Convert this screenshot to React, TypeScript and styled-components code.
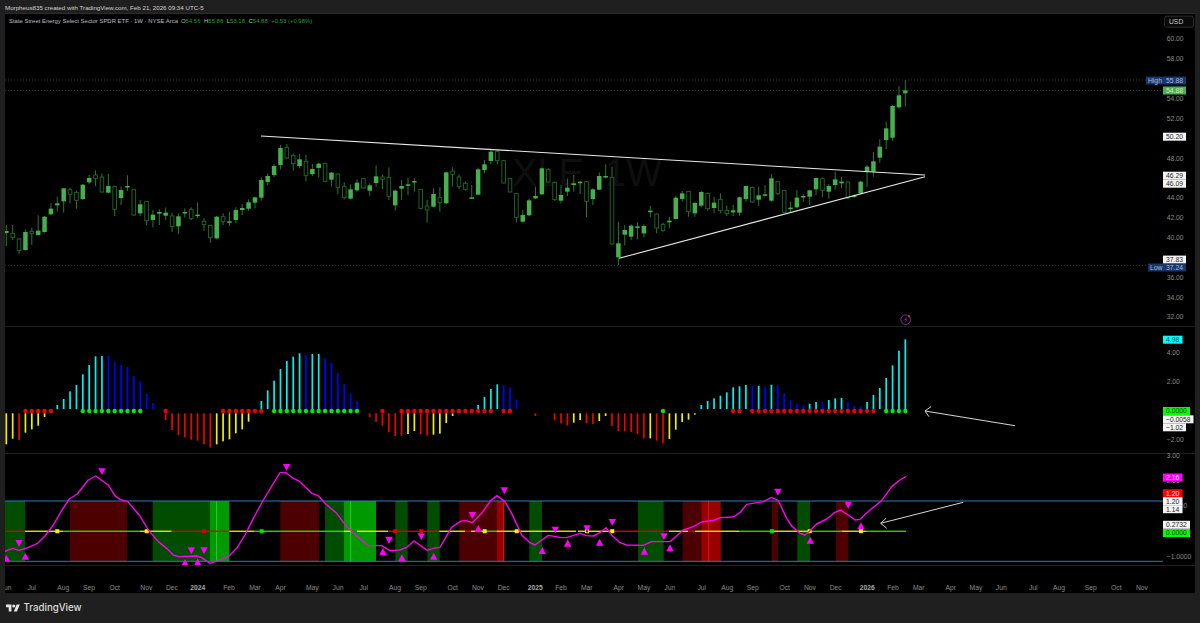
import React from "react";
import styled, { createGlobalStyle } from "styled-components";

const GlobalStyle = createGlobalStyle`
  html, body { margin: 0; padding: 0; background: #1f1f1f; }
  #root { width: 1200px; height: 623px; overflow: hidden; }
`;

const FONT = `"Liberation Sans", Arial, sans-serif`;
const AXIS_GREY = "#8c8c8c";

const Page = styled.div`
  display: flex;
  flex-direction: column;
  width: 1200px;
  height: 623px;
  background: #1f1f1f;
  font-family: ${FONT};
`;
const Header = styled.header`
  height: 13px;
  padding-left: 5px;
  font-size: 6.2px;
  line-height: 15px;
  color: #d4d4d4;
  white-space: nowrap;
`;
const Frame = styled.main`
  display: flex;
  flex-direction: column;
  width: 1190px;
  margin-left: 5px;
  background: #000;
  border-top: 1px solid #2c2c2c;
`;
const Pane = styled.section<{ $h: number }>`
  position: relative;
  display: grid;
  grid-template-columns: 1158px 32px;
  height: ${(p) => p.$h}px;
  box-sizing: border-box;
  border-bottom: 1px solid #202020;
`;
const Plot = styled.svg`
  display: block;
  width: 1158px;
  height: 100%;
  position: relative;
  z-index: 1;
`;
const AxisCanvas = styled.svg`
  display: block;
  width: 32px;
  height: 100%;
  overflow: visible;
  position: relative;
  z-index: 2;
`;
const AxisText = styled.text<{ $bold?: boolean }>`
  font-family: ${FONT};
  font-size: 6.75px;
  font-weight: ${(p) => (p.$bold ? 700 : 400)};
`;
const Legend = styled.div`
  position: absolute;
  z-index: 3;
  left: 4px;
  top: 3px;
  display: flex;
  align-items: center;
  height: 8px;
  font-size: 5.95px;
  color: #bcbfc4;
  white-space: nowrap;
`;
const LegendValues = styled.span`
  display: flex;
  gap: 3.6px;
  margin-left: 3px;
  color: #2b9a3b;
`;
const LegendLetter = styled.span`
  color: #bcbfc4;
`;
const Watermark = styled.div`
  position: absolute;
  z-index: 0;
  left: 507px;
  top: 137px;
  font-size: 38px;
  line-height: 44px;
  color: #0f0f0f;
  white-space: nowrap;
`;
const TimeCanvas = styled.svg`
  display: block;
  width: 1190px;
  height: 27px;
`;
const Footer = styled.footer`
  flex: 1;
  display: flex;
  align-items: center;
  gap: 3.5px;
  padding: 0 0 0 6px;
`;
const Brand = styled.span`
  font-family: Inter, ${FONT};
  font-size: 9.7px;
  font-weight: 500;
  color: #dcdcdc;
  line-height: 30px;
`;

/* ---------- data, in page coordinates ---------- */
const X = (i: number) => 6.3 + 6.376 * i;

type C = [number, number, number, number, 0 | 1];
const seg = (base: number, rows: C[]) =>
  rows.map(([a, b, c, d, h]) => [base + a / 3, base + b / 3, base + c / 3, base + d / 3, h] as C);

const candles: C[] = [
  ...seg(130, [
    [285,303,309,348,0],[285,310,322,330,1],[325,327,362,372,1],[298,306,360,362,0],[293,304,311,345,1],
    [256,302,315,317,0],[258,260,306,308,0],[220,236,253,255,0],[200,220,226,245,0],[175,175,214,248,0],
    [173,179,193,220,1],[182,187,211,236,1],[162,164,207,210,0],[135,144,157,163,0],[121,135,146,168,1],
    [130,141,186,188,1],[132,168,188,190,0],[167,170,238,258,1],[170,180,204,225,0],[136,168,171,183,0],
    [178,178,255,257,1],[210,223,250,258,0],[213,214,272,285,1],[240,254,270,292,0],[238,246,251,285,0],
    [233,248,257,270,0],[248,258,290,306,1],[250,259,289,312,0],[235,246,250,263,0],[232,238,266,270,1],
    [217,254,258,264,0],[264,274,284,302,1],[285,286,323,338,1],[258,260,325,328,0],[250,260,274,285,1],
    [245,274,278,288,0],[232,240,270,280,0],[222,234,240,255,0],[208,217,236,242,0],[200,202,218,235,0],
    [142,150,203,212,0],[130,138,156,165,0],[103,108,135,142,0],[45,54,105,118,0],[42,53,84,87,1],
    [70,77,101,122,1],
  ]),
  ...seg(150, [
    [12,28,48,55,0],[15,34,77,95,1],[42,57,72,78,0],[38,41,54,82,0],[38,40,94,97,1],
    [66,68,89,110,0],[70,72,113,133,1],[97,110,143,148,1],[103,118,146,148,0],[88,98,121,125,0],
    [84,86,114,116,1],[100,106,122,137,0],[46,79,99,110,0],[74,81,88,117,1],[52,82,139,150,1],
    [118,122,166,182,0],
  ]),
  ...seg(130, [
    [150,168,176,210,0],[143,163,167,195,0],[145,153,156,185,0],[177,178,235,238,1],[210,228,240,278,1],
    [175,192,230,232,0],[172,202,218,245,1],[125,127,220,222,0],[112,123,133,170,1],[133,141,170,178,1],
    [155,160,178,182,1],[165,202,205,207,0],[113,118,194,195,0],[90,103,120,130,0],[58,65,93,102,0],
    [60,65,92,103,1],[90,92,159,160,1],[143,146,186,187,1],[190,191,262,277,1],[240,255,275,278,0],
    [205,211,256,258,0],[170,198,205,207,0],[113,115,193,195,0],[115,118,156,158,1],[155,157,209,212,1],
    [165,195,212,220,0],[145,173,185,198,0],[135,160,165,185,0],[153,155,157,192,0],[153,155,214,262,1],
    [175,178,207,225,0],[127,138,179,180,0],[103,138,142,145,0],[110,142,342,345,1],[275,340,382,405,0],
    [285,300,314,346,0],[283,287,320,330,0],[277,289,292,328,0],[283,288,310,322,0],[228,242,245,262,0],
    [250,252,294,310,1],[278,283,302,305,1],[260,272,277,295,0],[197,203,267,268,0],[183,190,207,215,0],
    [183,184,245,260,1],[215,219,250,260,0],[183,186,227,232,0],[188,190,236,242,1],[200,218,234,250,0],
    [190,208,242,250,1],[227,241,251,258,1],[225,241,247,258,0],[200,202,248,258,0],[166,168,207,215,0],
    [170,172,216,218,1],[170,196,209,228,0],[165,193,197,200,0],[132,145,212,215,0],[153,155,191,195,1],
    [180,182,247,248,1],[215,233,237,248,0],[180,203,232,235,0],
  ]),
  ...seg(0, [
    [582,588,592,605,0],[571,571,590,615,0],[533,534,568,585,0],[533,536,571,592,1],[552,558,575,596,0],
    [515,538,555,568,0],[530,545,550,565,0],[545,546,594,598,1],[583,587,590,592,0],[543,545,580,583,0],
    [495,500,515,562,0],[456,484,515,530,0],[418,440,473,488,0],[365,385,420,447,0],[315,318,413,422,0],
    [258,286,322,325,0],[240,271,280,320,0],
  ]),
];

const histogram = `y313 y296 r300 y278r y268r y257r y231r n0r c195 c177 c154 c135 c103g c75g c49g c48g b48g b67g b75g b81g b107g b124g b162 b189 n0 r240r r270 r285 r292 r299 r302 r313 r323 y313 y304r y298r y280r y268r y245r n0r c183r c151 c122g c87g c63g c50g c40g b44g c42g c42g b55g b69g b99g b132g b160g b183g n0 r231 r245 r257r r277 r288 r287r y282r y273r r282r r287r y284r y281r y249r y228r n0r n0r n0r c195r c171r c147r c133 b135r b143r b179 n0 n0 r228 n0 n0 r240 r250 r257 y248 y240 r249 r252 y243 y228 r258 r273 r274 r276 r282 r295 y295 r302 r309g y297 y269 y246 y239 y224 c195 c183 c175 c167 c157 c142r c139r c135 b138r c138r b140r c134r b136r b160r b181r b193r b196r c191r c186r b187r c180r c175r c174r b186r b198r b199r c186r c165r c144 c114g c76g c32g c-2g`.split(" ");
const HIST_COLOR: Record<string, string> = { c: "#00f0f0", b: "#0000ff", r: "#f00000", y: "#f0f000", g: "#00ee00" };

const mark = (xBase: number, pts: number[][]) => pts.map(([x, y]) => [xBase + x / 3, 450 + y / 3]);
const oscLine = [
  ...mark(0, [[15,304],[38,295],[57,301],[85,292],[113,280],[135,258],[160,225],[185,182],[208,147],[232,132],[265,90],[287,78],[325,105],[345,137],[360,148],[383,155],[420,198],[445,240],[475,275],[500,295],[520,315],[535,320],[590,318],[605,323],[630,340],[655,332],[688,317],[710,295],[735,255],[760,205],[790,150],[840,68],[858,68],[875,82],[900,95],[935,130],[955,137],[975,160],[1010,190],[1040,230],[1075,262],[1105,287],[1145,287],[1170,302]]),
  ...mark(400, [[0,300],[20,292],[42,273],[82,301],[100,295],[120,292],[155,232],[180,215],[195,211],[217,218],[245,190],[272,152],[291,137],[315,155],[335,190],[365,255],[390,278],[405,285],[445,256],[480,262],[500,263],[540,250],[560,257],[580,258],[600,248],[618,233],[635,255],[660,278],[680,285],[730,286],[755,275],[810,275],[850,240],[880,230],[905,216],[945,210],[960,203],[1000,201],[1020,188],[1040,163],[1090,155],[1115,142],[1135,152],[1160,205],[1175,228]]),
  ...mark(800, [[0,250],[15,255],[30,242],[50,222],[80,207],[105,187],[122,180],[145,195],[165,210],[180,208],[210,180],[245,152],[275,110],[300,90],[317,80]]),
].map((p) => p.join(",")).join(" ");

const DARK_G = "#004d00", MID_G = "#009900", DARK_R = "#4d0000", MID_R = "#990000";
const bands: [number, number, string][] = [
  [5,25,DARK_G],[70,127,DARK_R],[152.7,210,DARK_G],[210,229.3,MID_G],[280.3,319,DARK_R],[325,344,DARK_G],[344,376,MID_G],
  [395.3,407.7,DARK_G],[427.3,439.7,DARK_G],[459.3,497,DARK_R],[497,504.3,MID_R],[529.3,542,DARK_G],[638,663.7,DARK_G],
  [682.7,701.3,DARK_R],[701.3,720.7,MID_R],[772,778,DARK_R],[797.3,810,DARK_G],[836,848.3,DARK_R],
];
const bandLines: [number, string][] = [[216.7,"#33dd33"],[350.7,"#33dd33"],[503.7,"#dd2222"],[708.7,"#dd2222"]];

const R = "#e00000", Y = "#f0f000", G = "#2ee000";
const midline: [number, number, string][] = [
  [5,25,R],[25,63,Y],[63,140,G],[140,171.7,Y],[171.7,229.3,R],[229.3,254,Y],[254,344,G],[344,352,Y],[357,388,Y],[388,439.3,R],
  [439.3,465,Y],[465,471,R],[471,483,Y],[483,496.7,G],[496.7,576,Y],[578,613,Y],[613,669,R],[669,688,Y],[688,695,R],[695,739,Y],
  [739,772,G],[772,810,Y],[810,841.7,G],[841.7,866.7,Y],[866.7,906,G],
];
const squares: [number, string][] = [
  [57.3,"#f0f000"],[146.7,"#f0f000"],[204,"#e00000"],[261.7,"#00e000"],[395.3,"#e00000"],[421.3,"#e00000"],[484.7,"#f0f000"],
  [516.7,"#f0f000"],[587,"#f0f000"],[612.3,"#f0f000"],[772,"#00e000"],[809.7,"#f0f000"],[861,"#f0f000"],
];

const tri = (xBase: number, rows: number[][]) => rows.map(([x, a, b]) => [xBase + x / 3, 450 + a / 3, 450 + b / 3]);
const downTris = [
  ...tri(0, [[57,270,290],[306,55,75],[574,292,313],[612,292,313],[860,42,63],[1167,260,282]]),
  ...tri(400, [[64,250,270],[217,186,207],[313,112,133],[466,230,250],[561,226,247],[637,207,227],[792,250,270],[1134,116,137]]),
  ...tri(800, [[145,155,176]]),
];
const upTris = [
  ...tri(0, [[19,315,333],[76,308,329],[555,327,347],[593,325,347],[651,346,367],[1149,293,315]]),
  ...tri(400, [[6,313,333],[101,308,329],[235,225,246],[427,290,312],[503,268,290],[599,266,287],[733,292,314],[810,283,304]]),
  ...tri(800, [[31,260,281],[183,217,238]]),
];

const months: [string, number, boolean?][] = [
  ["Jun",6],["Jul",31.7],["Aug",63.3],["Sep",89],["Oct",114.7],["Nov",146.3],["Dec",172],["2024",197.7,true],["Feb",229],["Mar",255],
  ["Apr",280.5],["May",312.3],["Jun",338],["Jul",363.7],["Aug",395],["Sep",420.7],["Oct",452.7],["Nov",478],["Dec",503.7],["2025",535.3,true],
  ["Feb",561],["Mar",586.7],["Apr",618.7],["May",644],["Jun",669.7],["Jul",701.7],["Aug",727.3],["Sep",752.7],["Oct",784.7],["Nov",810],
  ["Dec",835.7],["2026",867.3,true],["Feb",893],["Mar",918.7],["Apr",950.7],["May",976],["Jun",1001.3],["Jul",1033.3],["Aug",1059],
  ["Sep",1090.7],["Oct",1116.3],["Nov",1142],
];

const PANE1 = 14, PANE2 = 327, PANE3 = 454;
const priceY = (p: number) => 39 + (60 - p) * 9.93;

const WHITE = { bg: "#f4f4f4", fg: "#222" };
const NAVY = { bg: "#17376b", fg: "#a9b9d6" };

/* ---------- svg parts ---------- */
const Candles = () => (
  <>
    {candles.map(([wt, bt, bb, wb, hollow], i) => {
      const x = X(i);
      return (
        <g key={i}>
          <line x1={x} x2={x} y1={wt} y2={wb} stroke="#267a30" strokeWidth={1} />
          {hollow ? (
            <rect x={x - 1.8} y={bt} width={3.6} height={bb - bt} fill="#000" stroke="#1f6a28" strokeWidth={0.9} />
          ) : (
            <rect x={x - 2.25} y={bt} width={4.5} height={Math.max(bb - bt, 1.5)} fill="#45b04d" />
          )}
        </g>
      );
    })}
  </>
);

const Histogram = () => (
  <>
    {histogram.map((raw, i) => {
      const m = raw.match(/^([a-z])(-?\d+)([rg]?)$/)!;
      const x = X(i);
      const y = 340 + Number(m[2]) / 3;
      const above = Number(m[2]) < 210;
      return (
        <g key={i}>
          {m[1] !== "n" && (
            <rect x={x - 0.85} width={1.7} y={above ? y : 413.3} height={above ? 409 - y : y - 413.3} fill={HIST_COLOR[m[1]]} />
          )}
          {m[3] && <circle cx={x} cy={411} r={2.2} fill={HIST_COLOR[m[3]]} />}
        </g>
      );
    })}
  </>
);

const Oscillator = () => (
  <>
    {bands.map(([a, b, c], i) => (
      <rect key={i} x={a} width={b - a} y={501} height={60.3} fill={c} />
    ))}
    {bandLines.map(([x, c], i) => (
      <rect key={i} x={x - 0.4} width={0.8} y={501} height={60.3} fill={c} />
    ))}
    <line x1={5} x2={1163} y1={501} y2={501} stroke="#2a7fbe" strokeWidth={1} />
    <line x1={5} x2={1163} y1={561.3} y2={561.3} stroke="#2a7fbe" strokeWidth={1} />
    {midline.map(([a, b, c], i) => (
      <rect key={i} x={a} width={b - a} y={530.6} height={1.3} fill={c} />
    ))}
    {squares.map(([x, c], i) => (
      <rect key={i} x={x - 2} y={529.2} width={4} height={4} fill={c} />
    ))}
    <rect x={586} y={530.2} width={2} height={2} fill="#000" />
    {downTris.map(([x, a, b], i) => (
      <polygon key={i} points={`${x - 3.7},${a} ${x + 3.7},${a} ${x},${b}`} fill="#ff00ff" />
    ))}
    {upTris.map(([x, a, b], i) => (
      <polygon key={i} points={`${x - 3.7},${b} ${x + 3.7},${b} ${x},${a}`} fill="#ff00ff" />
    ))}
    <polyline points={oscLine} fill="none" stroke="#ff00ee" strokeWidth={1.4} strokeLinejoin="round" strokeLinecap="round" />
  </>
);

const Arrow = ({ x1, y1, x2, y2, a, b }: { x1: number; y1: number; x2: number; y2: number; a: number[]; b: number[] }) => (
  <g fill="none" stroke="#d6d6d6" strokeWidth={1}>
    <line x1={x1} y1={y1} x2={x2} y2={y2} />
    <polyline points={`${a[0]},${a[1]} ${x2},${y2} ${b[0]},${b[1]}`} />
  </g>
);

const BoltBadge = () => (
  <g>
    <circle cx={905.7} cy={319.7} r={4.8} fill="none" stroke="#7b2d8e" strokeWidth={1} />
    <path d="M906.6 316.6l-2.3 3.4h1.6l-.7 2.8 2.4-3.5H906z" fill="#7b2d8e" />
    <circle cx={909} cy={316.3} r={1.1} fill="#f23645" />
  </g>
);

const TvLogo = () => (
  <svg width="14" height="8" viewBox="0 3 36 20" preserveAspectRatio="none" aria-hidden="true">
    <path d="M14 22H7V11H0V4h14v18zM28 22h-8l7.5-18h8L28 22z" fill="#e4e4e4" />
    <circle cx="20" cy="8" r="4" fill="#e4e4e4" />
  </svg>
);

/* axis marks live on the axis' own svg, placed by their value (page y) */
const Tick = ({ y, children }: { y: number; children: React.ReactNode }) => (
  <AxisText x={1166.7} y={y + 2.4} fill={AXIS_GREY}>{children}</AxisText>
);
const Tag = ({ y, bg, fg, text, side }: { y: number; bg: string; fg: string; text: string; side?: string }) => {
  const w = text.length === 4 ? 19.5 : text.length === 5 ? 23 : text.length === 6 ? 27 : 30.5;
  return (
    <g>
      {side && (
        <>
          <rect x={1163 - (side === "High" ? 17 : 15)} y={y - 4} width={side === "High" ? 17 : 15} height={8} fill={bg} />
          <AxisText x={1163 - (side === "High" ? 15 : 13)} y={y + 2.4} fill={fg}>{side}</AxisText>
        </>
      )}
      <rect x={1163} y={y - 4} width={w} height={8} fill={bg} />
      <AxisText x={1166} y={y + 2.4} fill={fg}>{text}</AxisText>
    </g>
  );
};

export default function App() {
  return (
    <Page>
      <GlobalStyle />
      <Header>Morpheus835 created with TradingView.com, Feb 21, 2026 09:34 UTC-5</Header>
      <Frame>
        <Pane $h={313}>
          <Legend>
            State Street Energy Select Sector SPDR ETF · 1W · NYSE Arca
            <LegendValues>
              <span><LegendLetter>O</LegendLetter>54.56</span>
              <span><LegendLetter>H</LegendLetter>55.88</span>
              <span><LegendLetter>L</LegendLetter>53.18</span>
              <span><LegendLetter>C</LegendLetter>54.88</span>
              <span>+0.53 (+0.98%)</span>
            </LegendValues>
          </Legend>
          <Watermark>XLE, 1W</Watermark>
          <Plot viewBox={`5 ${PANE1} 1158 312`} preserveAspectRatio="none">
            <line x1={5} x2={1146} y1={80} y2={80} stroke="#4a4a4a" strokeWidth={0.7} strokeDasharray="1 2" />
            <line x1={5} x2={1163} y1={90.5} y2={90.5} stroke="#1f5f25" strokeWidth={0.7} strokeDasharray="1 2" />
            <line x1={5} x2={1147} y1={265.4} y2={265.4} stroke="#4a4a4a" strokeWidth={0.7} strokeDasharray="1 2" />
            <Candles />
            <line x1={261} y1={136} x2={925} y2={175} stroke="#e8e8e8" strokeWidth={1.1} />
            <line x1={619} y1={258.3} x2={925} y2={176.7} stroke="#e8e8e8" strokeWidth={1.1} />
            <BoltBadge />
          </Plot>
          <AxisCanvas viewBox={`1163 ${PANE1} 32 312`} preserveAspectRatio="none">
            <rect x={1164.5} y={16.2} width={29} height={11} rx={2} fill="#0a0a0a" stroke="#2a2a2a" strokeWidth={1} />
            <AxisText x={1169} y={24} fill="#c8c8c8">USD</AxisText>
            {[60, 58, 54, 52, 48, 44, 42, 40, 36, 34, 32].map((p) => (
              <Tick key={p} y={priceY(p)}>{p}.00</Tick>
            ))}
            <Tag y={80.5} {...NAVY} text="55.88" side="High" />
            <Tag y={90.5} bg="#4caf50" fg="#c8ecc9" text="54.88" />
            <Tag y={136.7} {...WHITE} text="50.20" />
            <Tag y={175.7} {...WHITE} text="46.29" />
            <Tag y={183.7} {...WHITE} text="46.09" />
            <Tag y={259.6} {...WHITE} text="37.83" />
            <Tag y={267.5} {...NAVY} text="37.24" side="Low" />
          </AxisCanvas>
        </Pane>
        <Pane $h={127}>
          <Plot viewBox={`5 ${PANE2} 1158 126`} preserveAspectRatio="none">
            <Histogram />
            <Arrow x1={1015} y1={425.7} x2={925} y2={411} a={[931, 406.7]} b={[929, 416.7]} />
          </Plot>
          <AxisCanvas viewBox={`1163 ${PANE2} 32 126`} preserveAspectRatio="none">
            <Tick y={352.7}>4.00</Tick>
            <Tick y={382}>2.00</Tick>
            <Tick y={439.3}>−2.00</Tick>
            <Tag y={339.7} bg="#00ffff" fg="#0b3b3b" text="4.98" />
            <Tag y={411} bg="#00ff00" fg="#0b3b0b" text="0.0000" />
            <Tag y={419.3} {...WHITE} text="−0.0058" />
            <Tag y={427.3} {...WHITE} text="−1.02" />
          </AxisCanvas>
        </Pane>
        <Pane $h={112}>
          <Plot viewBox={`5 ${PANE3} 1158 111`} preserveAspectRatio="none">
            <Oscillator />
            <Arrow x1={963.3} y1={502.3} x2={880.7} y2={523.3} a={[886, 518.3]} b={[886.7, 528.3]} />
          </Plot>
          <AxisCanvas viewBox={`1163 ${PANE3} 32 111`} preserveAspectRatio="none">
            <Tick y={455.5}>3.00</Tick>
            <Tick y={481}>2.00</Tick>
            <Tick y={506}>1.0000</Tick>
            <Tick y={556.5}>−1.0000</Tick>
            <Tag y={477.5} bg="#ff00ff" fg="#ffe0ff" text="2.16" />
            <Tag y={493.2} bg="#ff0000" fg="#ffe8e8" text="1.20" />
            <Tag y={501.2} {...WHITE} text="1.20" />
            <Tag y={509.2} {...WHITE} text="1.14" />
            <Tag y={524.8} {...WHITE} text="0.2732" />
            <Tag y={533} bg="#00ff00" fg="#0b3b0b" text="0.0000" />
          </AxisCanvas>
        </Pane>
        <TimeCanvas viewBox="5 566 1190 27">
          {months.map(([label, x, major]) => (
            <AxisText key={`${label}${x}`} x={x} y={589.7} textAnchor="middle" $bold={major} fill={major ? "#a8a8a8" : AXIS_GREY}>
              {label}
            </AxisText>
          ))}
        </TimeCanvas>
      </Frame>
      <Footer>
        <TvLogo />
        <Brand>TradingView</Brand>
      </Footer>
    </Page>
  );
}
